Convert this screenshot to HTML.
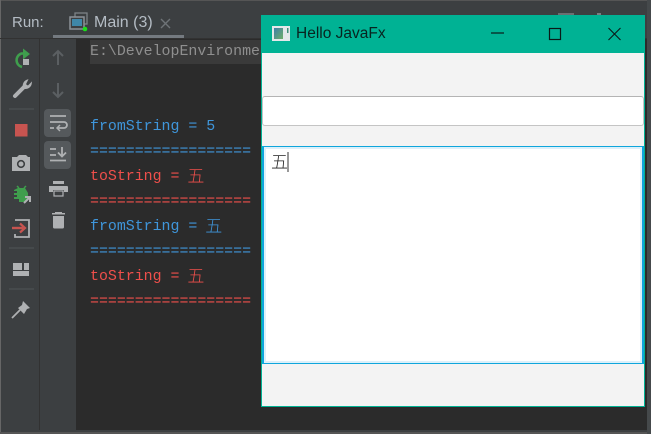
<!DOCTYPE html>
<html><head><meta charset="utf-8">
<style>
*{box-sizing:border-box;margin:0;padding:0}
html,body{width:651px;height:434px;overflow:hidden;background:#3c3f41;position:relative}
div{position:absolute}
.m{position:absolute;left:90px;font:14.92px/20px "Liberation Mono","DejaVu Sans Mono","Noto Sans CJK SC",monospace;white-space:pre;letter-spacing:0}
.m span{display:inline-block;width:15px;font:17px/20px "Noto Sans CJK SC",sans-serif;font-weight:300;margin-top:-2px;margin-left:-1px;vertical-align:top}
.b{color:#3f96db}.r{color:#ef4f4b}
svg{position:absolute;left:0;top:0}
</style></head><body>
<div style="left:0;top:0;width:651px;height:1px;background:#555"></div>
<div style="left:0;top:0;width:1px;height:434px;background:#666"></div>
<div style="left:0;top:432px;width:651px;height:2px;background:#555"></div>
<div style="left:647px;top:0;width:4px;height:434px;background:#45494b"></div>
<div style="left:0;top:38px;width:647px;height:1px;background:#323232"></div>
<div style="left:39px;top:39px;width:1px;height:391px;background:#323232"></div>
<div style="left:76px;top:39px;width:571px;height:391px;background:#2b2b2b"></div>
<div style="left:90px;top:40px;width:172px;height:24px;background:#3a3a3a"></div>
<div style="left:12px;top:13px;font:15px/20px 'Liberation Sans',sans-serif;color:#b4bcc4">Run:</div>
<div style="left:94px;top:13px;font:16px/20px 'Liberation Sans',sans-serif;color:#b4bcc4">Main (3)</div>
<div style="left:53px;top:35px;width:131px;height:3px;background:#747a80"></div>
<div class="m" style="top:42px;color:#8f8f8f">E:\DevelopEnvironme</div>
<div class="m b" style="top:117px">fromString = 5</div>
<div class="m b" style="top:142px">==================</div>
<div class="m r" style="top:167px">toString = <span>五</span></div>
<div class="m r" style="top:192px">==================</div>
<div class="m b" style="top:217px">fromString = <span>五</span></div>
<div class="m b" style="top:242px">==================</div>
<div class="m r" style="top:267px">toString = <span>五</span></div>
<div class="m r" style="top:292px">==================</div>
<svg width="651" height="434" viewBox="0 0 651 434">
<!-- tab icon -->
<rect x="75" y="13" width="12" height="11" fill="none" stroke="#7d8387" stroke-width="1.3"/>
<rect x="70" y="17" width="14" height="12" fill="#3c3f41" stroke="#8c9297" stroke-width="1.5"/>
<rect x="72" y="19" width="10" height="7" fill="#3f87a8"/>
<circle cx="85" cy="29" r="2.3" fill="#19e019"/>
<path d="M161 19l9 9M170 19l-9 9" stroke="#6e7377" stroke-width="1.4"/>
<!-- rerun -->
<path d="M22 67A7 7 0 0 1 21.500 53.500L26 53.500" fill="none" stroke="#3f9e4d" stroke-width="2.500"/>
<path d="M23 48.500l7 5.500-7 5.500z" fill="#3f9e4d"/>
<rect x="23" y="59" width="6" height="6" fill="#afb1b3"/>
<!-- wrench -->
<path d="M15 96l10-10" stroke="#afb1b3" stroke-width="4" stroke-linecap="round"/>
<path d="M24 88a5.500 5.500 0 0 1 3-7.500l-2 4 3 2 3-3a5.500 5.500 0 0 1-7 4.500z" fill="#afb1b3" stroke="#afb1b3" stroke-width="1.5"/>
<path d="M9 109h25M9 248h25M9 289h25" stroke="#505456"/>
<!-- stop -->
<rect x="15" y="124" width="12.500" height="12.500" fill="#c75450"/>
<!-- camera -->
<path d="M12 157h5l2-2h7l2 2h2v14H12z" fill="#afb1b3"/>
<circle cx="21" cy="164" r="3.300" fill="none" stroke="#3c3f41" stroke-width="1.6"/>
<!-- bug -->
<path d="M18 188h7l3 5v6l-4 3h-5v-3h-5v-2h3v-2h-3v-2h3v-2h-3v-1z" fill="#3f9e4d"/>
<path d="M17 186l2 2M26 186l-2 2" stroke="#3f9e4d" stroke-width="1.500"/>
<path d="M24 203l5-5M25 197h5v5" fill="none" stroke="#afb1b3" stroke-width="2"/>
<!-- exit -->
<path d="M15 220h14v17H15v-3" fill="none" stroke="#afb1b3" stroke-width="1.800"/>
<path d="M12 228h11" stroke="#c75450" stroke-width="2.400"/>
<path d="M20 223.500l5 4.500-5 4.500" fill="none" stroke="#c75450" stroke-width="2.200"/>
<!-- layout -->
<path d="M13 263h9v7h-9zM24 263h5v7h-5zM13 271h16v5H13z" fill="#afb1b3"/>
<!-- pin -->
<path d="M12 318l8-8" stroke="#afb1b3" stroke-width="1.800"/>
<path d="M23 301l7 7-3 1-3 5-6-6 4-3z" fill="#afb1b3"/>
<!-- up/down -->
<path d="M58 65V52M53 56l5-5 5 5" fill="none" stroke="#5b5f62" stroke-width="2"/>
<path d="M58 83v13M53 92l5 5 5-5" fill="none" stroke="#5b5f62" stroke-width="2"/>
<!-- toggled -->
<rect x="44" y="109" width="27" height="28" rx="4" fill="#55595c"/>
<rect x="44" y="141" width="27" height="28" rx="4" fill="#55595c"/>
<path d="M50 116h16M50 122h14a2.500 2.500 0 0 1 0 6h-6M50 128h4" fill="none" stroke="#afb1b3" stroke-width="1.800"/>
<path d="M60 125l-3 3 3 3" fill="none" stroke="#afb1b3" stroke-width="1.500"/>
<path d="M50 149h6M50 155h6M50 160.500h16" fill="none" stroke="#afb1b3" stroke-width="1.800"/>
<path d="M62 147v9M58 152.500l4 4 4-4" fill="none" stroke="#afb1b3" stroke-width="1.800"/>
<!-- print -->
<path d="M53 181h11v3H53zM49 186h18a1 1 0 0 1 1 1v5h-4v-2H53v2h-4z" fill="#afb1b3"/>
<rect x="54" y="191" width="9" height="5" fill="#3c3f41" stroke="#afb1b3" stroke-width="1.200"/>
<!-- trash -->
<path d="M52 213h13v1.500H52zM55 212h7v1h-7zM53 216h11v11a1.500 1.500 0 0 1-1.500 1.500h-8A1.500 1.500 0 0 1 53 227z" fill="#afb1b3"/>
<!-- behind window -->
<rect x="558" y="13" width="16" height="2" fill="#6b6f72"/>
<rect x="597" y="13" width="4" height="2" fill="#7b7f82"/>
</svg>
<!-- JavaFX window -->
<div style="left:261px;top:15px;width:384px;height:392px;background:#f3f3f3;border:1px solid #00b294;border-top:0">
  <div style="left:-1px;top:0;width:384px;height:38px;background:#00b294"></div>
  <div style="left:34px;top:9px;font:15.500px/20px 'Liberation Sans',sans-serif;color:#082420">Hello JavaFx</div>
  <div style="left:0;top:81px;width:382px;height:30px;background:#fff;border:1px solid #c4c4c4;border-top-color:#b4b4b4;border-radius:3px"></div>
  <div style="left:0;top:131px;width:382px;height:218px;background:#fff;border:2px solid #0fa6dc;border-top-width:1px;border-bottom-width:1px;box-shadow:inset 0 0 0 2px #dcf0fa"></div>
  <div style="left:9px;top:136px;font:17px/20px 'Noto Sans CJK SC',sans-serif;font-weight:300;color:#222">五</div>
  <div style="left:25px;top:137px;width:2px;height:20px;background:#999"></div>
</div>
<svg width="651" height="434" viewBox="0 0 651 434" style="z-index:5">
<defs><linearGradient id="g2" x1="0" y1="0" x2="1" y2="1"><stop offset="0" stop-color="#3f7fa8"/><stop offset="1" stop-color="#6fae6a"/></linearGradient></defs>
<rect x="272" y="26" width="18" height="15" fill="#e4e8ea"/>
<rect x="274" y="28" width="9" height="11" fill="url(#g2)"/>
<rect x="287" y="28" width="1.500" height="5" fill="#3f8f7a"/>
<path d="M491 33h13" stroke="#0a1a18" stroke-width="1.200"/>
<rect x="549.500" y="28.500" width="11" height="11" fill="none" stroke="#0a1a18" stroke-width="1.200"/>
<path d="M608.500 28l12 12M620.500 28l-12 12" stroke="#0a1a18" stroke-width="1.100"/>
</svg>
</body></html>
